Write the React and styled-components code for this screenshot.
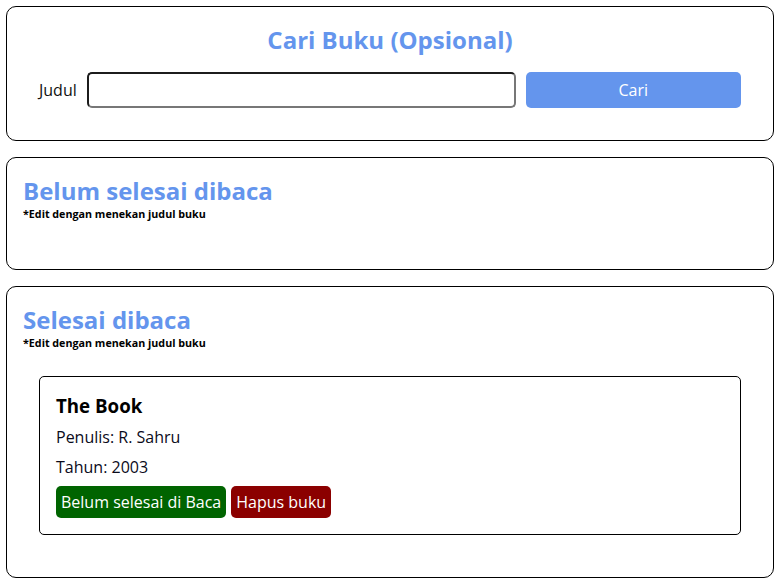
import React from "react";
import styled, { createGlobalStyle } from "styled-components";

const GlobalStyle = createGlobalStyle`
  * {
    box-sizing: border-box;
    margin: 0;
    padding: 0;
  }
  body {
    margin: 0;
    background: #fff;
    font-family: "Open Sans", "Noto Sans", sans-serif;
    color: #000;
  }
`;

const books = [{ id: 1, title: "The Book", author: "R. Sahru", year: 2003 }];

const App = () => {
  return (
    <>
      <GlobalStyle />
      <Main>
        <Section>
          <Title center>Cari Buku (Opsional)</Title>
          <SearchForm onSubmit={(e) => e.preventDefault()}>
            <Label htmlFor="searchBookTitle">Judul</Label>
            <SearchInput id="searchBookTitle" type="text" />
            <SearchButton type="submit">Cari</SearchButton>
          </SearchForm>
        </Section>

        <Section>
          <Title>Belum selesai dibaca</Title>
          <Hint>*Edit dengan menekan judul buku</Hint>
          <BookList />
        </Section>

        <Section>
          <Title>Selesai dibaca</Title>
          <Hint>*Edit dengan menekan judul buku</Hint>
          <BookList>
            {books.map((book) => (
              <BookCard key={book.id}>
                <BookTitle>{book.title}</BookTitle>
                <BookInfo>Penulis: {book.author}</BookInfo>
                <BookInfo>Tahun: {book.year}</BookInfo>
                <Actions>
                  <ActionButton color="#006400">Belum selesai di Baca</ActionButton>
                  <ActionButton color="#8b0000">Hapus buku</ActionButton>
                </Actions>
              </BookCard>
            ))}
          </BookList>
        </Section>
      </Main>
    </>
  );
};

export default App;

const Main = styled.main`
  width: 768px;
  margin: 6px;
  display: flex;
  flex-direction: column;
  gap: 16px;
`;

const Section = styled.section`
  border: 1px solid #000;
  border-radius: 10px;
  padding: 16px;
  display: flex;
  flex-direction: column;
`;

const Title = styled.h2`
  font-size: 24px;
  font-weight: 700;
  color: #6495ed;
  text-align: ${(p) => (p.center ? "center" : "left")};
  line-height: normal;
`;

const Hint = styled.h6`
  font-size: 10.72px;
  font-weight: 700;
  line-height: 14.2px;
`;

const SearchForm = styled.form`
  display: flex;
  align-items: center;
  margin: 16px 0;
  padding-left: 16px;
`;

const Label = styled.label`
  font-size: 16px;
  color: #111;
  margin-right: 10px;
`;

const SearchInput = styled.input`
  width: 429px;
  height: 36px;
  border: 2px solid;
  border-color: #1c1c1c #777 #777 #1c1c1c;
  border-radius: 5px;
  padding: 4px 8px;
  font-family: inherit;
  font-size: 16px;
  outline: none;
`;

const SearchButton = styled.button`
  width: 215px;
  height: 36px;
  margin-left: 10px;
  border: none;
  border-radius: 5px;
  background: #6495ed;
  color: #fff;
  font-family: inherit;
  font-size: 16px;
  cursor: pointer;
`;

const BookList = styled.div`
  padding: 16px;
`;

const BookCard = styled.article`
  border: 1px solid #000;
  border-radius: 5px;
  padding: 16px;
  margin: 10px 0;
`;

const BookTitle = styled.h3`
  font-size: 18.72px;
  font-weight: 700;
  line-height: normal;
`;

const BookInfo = styled.p`
  font-size: 16px;
  line-height: normal;
  margin: 8px 0;
  color: #0a0a1a;
`;

const Actions = styled.div`
  display: flex;
  gap: 5px;
  margin-top: 8px;
`;

const ActionButton = styled.button`
  background: ${(p) => p.color};
  color: #fff;
  border: none;
  border-radius: 5px;
  padding: 5px;
  font-family: inherit;
  font-size: 16px;
  line-height: normal;
  cursor: pointer;
`;
